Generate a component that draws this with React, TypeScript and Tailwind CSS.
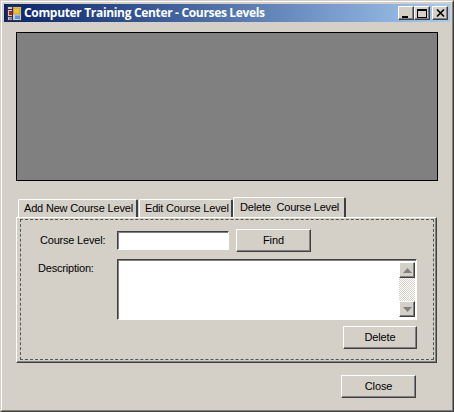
import React from 'react';

const bevel = 'border border-t-white border-l-white border-r-[#404040] border-b-[#404040] shadow-[inset_-1px_-1px_0_#808080]';
const sunken = 'border border-t-[#404040] border-l-[#404040] border-r-white border-b-white bg-white shadow-[inset_1px_1px_0_#808080]';

const CaptionButton = ({ children, className = '' }: { children: React.ReactNode; className?: string }) => (
  <div className={`w-[16px] h-[14px] bg-[#d4d0c8] flex items-center justify-center ${bevel} ${className}`}>{children}</div>
);

const PushButton = ({ label, className = '' }: { label: string; className?: string }) => (
  <button className={`h-[23px] bg-[#d4d0c8] text-[11px] tracking-[-0.1px] text-black flex items-center justify-center ${bevel} ${className}`}>{label}</button>
);

const ScrollArrow = ({ up }: { up?: boolean }) => (
  <div className={`w-[16px] h-[16px] bg-[#d4d0c8] flex items-center justify-center ${bevel}`}>
    <svg width="9" height="5" viewBox="0 0 9 5">
      <path d={up ? 'M4.5 0 L9 5 L0 5 Z' : 'M0 0 L9 0 L4.5 5 Z'} fill="#808080" />
    </svg>
  </div>
);

const AppIcon = () => (
  <svg width="15" height="15" viewBox="0 0 15 15" className="shrink-0">
    <rect x="0.5" y="0.5" width="14" height="14" fill="#c8ccd4" stroke="#303048" />
    <path d="M1 3.5 H5.5 M5.5 1 V14 M1 10.5 H5.5" stroke="#303048" fill="none" />
    <rect x="2" y="5" width="3" height="4" fill="#c81818" />
    <rect x="6.5" y="2" width="6.5" height="6" fill="#f0c030" stroke="#b08818" strokeWidth="0.6" />
    <rect x="2" y="11.5" width="3" height="2" fill="#707888" />
    <rect x="8" y="9.5" width="5" height="3.5" fill="#5c94e0" />
  </svg>
);

export default function App() {
  return (
    <div className="w-[454px] h-[412px] overflow-hidden border border-[#d4d0c8] border-r-[#404040] border-b-[#404040] font-['Liberation_Sans',Arial,sans-serif]">
      <div className="h-full border border-t-white border-l-white border-r-[#808080] border-b-[#808080] bg-[#d4d0c8] p-[2px]">
        {/* Title bar */}
        <div className="h-[18px] flex items-center pl-[3px] pr-[2px] bg-gradient-to-r from-[#0a246a] to-[#a6caf0]">
          <AppIcon />
          <span className="ml-[2px] flex-1 text-[12px] font-bold leading-none text-white font-['Open_Sans',sans-serif] tracking-[-0.33px]">Computer Training Center - Courses Levels</span>
          <CaptionButton>
            <div className="w-[6px] h-[2px] bg-black mt-[7px] -ml-[2px]" />
          </CaptionButton>
          <CaptionButton>
            <div className="w-[10px] h-[9px] border border-black border-t-2" />
          </CaptionButton>
          <CaptionButton className="ml-[2px]">
            <svg width="9" height="8" viewBox="0 0 9 8">
              <path d="M1 0.5 L8 7.5 M8 0.5 L1 7.5" stroke="black" strokeWidth="1.6" />
            </svg>
          </CaptionButton>
        </div>

        <div className="pl-[12px] pt-[10px]">
          {/* Picture box */}
          <div className="w-[422px] h-[149px] bg-[#808080] border border-black" />

          {/* Tabs */}
          <div className="mt-[16px] h-[20px] flex items-end pl-[2px] text-[11px] tracking-[-0.18px] text-black whitespace-pre">
            <div className="w-[120px] h-[18px] pl-[5px] flex items-center border-t border-l border-white border-r-2 border-r-[#404040] rounded-t-[2px]">Add New Course Level</div>
            <div className="ml-[1px] w-[94px] h-[18px] pl-[5px] flex items-center border-t border-l border-white border-r-2 border-r-[#404040] rounded-t-[2px]">Edit Course Level</div>
            <div className="w-[113px] h-[20px] pl-[6px] flex items-center border-t border-l border-white border-r-2 border-r-[#404040] rounded-t-[2px]">Delete  Course Level</div>
          </div>

          {/* Tab page */}
          <div className={`w-[421px] h-[146px] pl-[3px] pt-[1px] pr-[1px] pb-[2px] ${bevel}`}>
            <div className="w-[414px] h-[141px] border border-dashed border-[#555555] pt-[9px] text-[11px] tracking-[-0.2px] text-black">
              <div className="flex items-center">
                <label className="w-[96px] pl-[19px]">Course Level:</label>
                <div className={`w-[112px] h-[19px] ${sunken}`} />
                <PushButton label="Find" className="ml-[7px] w-[75px]" />
              </div>
              <div className="flex mt-[7px]">
                <label className="w-[96px] pl-[17px] pt-[1px]">Description:</label>
                <div className={`w-[300px] h-[61px] flex justify-end p-[2px] pr-[1px] ${sunken}`}>
                  <div className="w-[16px] h-full flex flex-col justify-between bg-[repeating-conic-gradient(#d4d0c8_0_25%,#ffffff_0_50%)] bg-[length:2px_2px]">
                    <ScrollArrow up />
                    <ScrollArrow />
                  </div>
                </div>
              </div>
              <div className="flex justify-end mt-[6px] pr-[16px]">
                <PushButton label="Delete" className="w-[74px]" />
              </div>
            </div>
          </div>

          {/* Footer */}
          <div className="flex justify-end mt-[12px] pr-[34px]">
            <PushButton label="Close" className="w-[75px]" />
          </div>
        </div>
      </div>
    </div>
  );
}
